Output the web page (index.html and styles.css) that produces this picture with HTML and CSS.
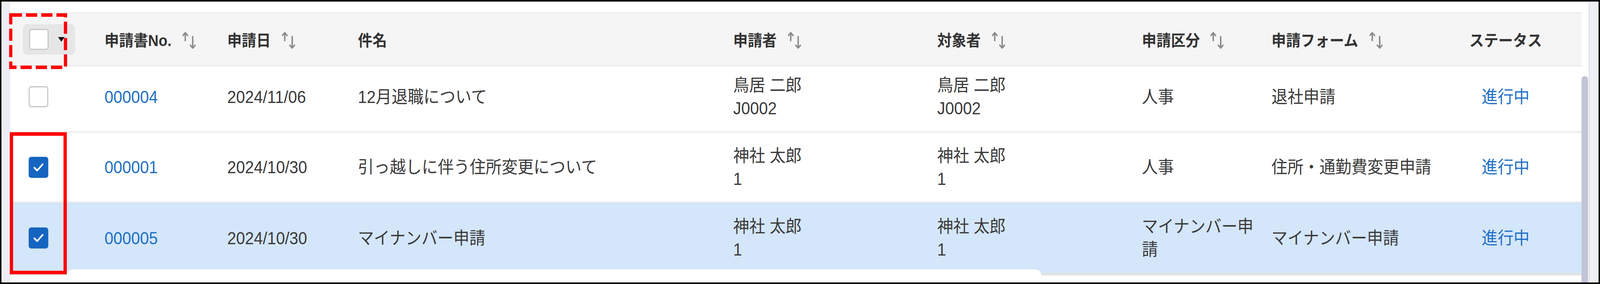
FILE: index.html
```html
<!DOCTYPE html>
<html lang="ja">
<head>
<meta charset="utf-8">
<title>申請一覧</title>
<link rel="stylesheet" href="styles.css">
</head>
<body>
<div class="viewport">
<div class="frame">
  <div class="side-left"></div>
  <div class="main">
    <div class="table">
      <div class="grid head">
        <div class="cell cell-check">
          <div class="hcheck">
            <span class="cb"></span>
            <span class="caret"></span>
          </div>
        </div>
        <div class="cell"><span>申請書No.</span><svg class="sort" viewBox="0 0 36 44"><path d="M7.5 23V3M1 10l6.5-7 6.5 7"/><path d="M28 13v29M21.5 35l6.5 7 6.5-7"/></svg></div>
        <div class="cell"><span>申請日</span><svg class="sort" viewBox="0 0 36 44"><path d="M7.5 23V3M1 10l6.5-7 6.5 7"/><path d="M28 13v29M21.5 35l6.5 7 6.5-7"/></svg></div>
        <div class="cell"><span>件名</span></div>
        <div class="cell"><span>申請者</span><svg class="sort" viewBox="0 0 36 44"><path d="M7.5 23V3M1 10l6.5-7 6.5 7"/><path d="M28 13v29M21.5 35l6.5 7 6.5-7"/></svg></div>
        <div class="cell"><span>対象者</span><svg class="sort" viewBox="0 0 36 44"><path d="M7.5 23V3M1 10l6.5-7 6.5 7"/><path d="M28 13v29M21.5 35l6.5 7 6.5-7"/></svg></div>
        <div class="cell"><span>申請区分</span><svg class="sort sort-tight" viewBox="0 0 36 44"><path d="M7.5 23V3M1 10l6.5-7 6.5 7"/><path d="M28 13v29M21.5 35l6.5 7 6.5-7"/></svg></div>
        <div class="cell"><span>申請フォーム</span><svg class="sort" viewBox="0 0 36 44"><path d="M7.5 23V3M1 10l6.5-7 6.5 7"/><path d="M28 13v29M21.5 35l6.5 7 6.5-7"/></svg></div>
        <div class="cell cell-status"><span>ステータス</span></div>
      </div>

      <div class="grid row first">
        <div class="cell cell-check"><span class="cb"></span></div>
        <div class="cell link">000004</div>
        <div class="cell">2024/11/06</div>
        <div class="cell">12月退職について</div>
        <div class="cell"><div>鳥居 二郎<br>J0002</div></div>
        <div class="cell"><div>鳥居 二郎<br>J0002</div></div>
        <div class="cell"><div>人事</div></div>
        <div class="cell">退社申請</div>
        <div class="cell cell-status link">進行中</div>
      </div>

      <div class="grid row">
        <div class="cell cell-check"><span class="cb on"><svg viewBox="0 0 54 54"><path d="M14 28l9 8 17-18"/></svg></span></div>
        <div class="cell link">000001</div>
        <div class="cell">2024/10/30</div>
        <div class="cell">引っ越しに伴う住所変更について</div>
        <div class="cell"><div>神社 太郎<br>1</div></div>
        <div class="cell"><div>神社 太郎<br>1</div></div>
        <div class="cell"><div>人事</div></div>
        <div class="cell">住所・通勤費変更申請</div>
        <div class="cell cell-status link">進行中</div>
      </div>

      <div class="grid row selected">
        <div class="cell cell-check"><span class="cb on"><svg viewBox="0 0 54 54"><path d="M14 28l9 8 17-18"/></svg></span></div>
        <div class="cell link">000005</div>
        <div class="cell">2024/10/30</div>
        <div class="cell">マイナンバー申請</div>
        <div class="cell"><div>神社 太郎<br>1</div></div>
        <div class="cell"><div>神社 太郎<br>1</div></div>
        <div class="cell"><div>マイナンバー申請</div></div>
        <div class="cell">マイナンバー申請</div>
        <div class="cell cell-status link">進行中</div>
      </div>
    </div>
    <div class="scroll"><div class="thumb"></div></div>
  </div>
  <div class="side-right"></div>

  <div class="bottom-panel"></div>
  <svg class="mark-dashed" viewBox="0 0 160 143"><rect x="4.5" y="4.5" width="151" height="134"/></svg>
  <div class="mark-solid"></div>
</div>
</div>
</body>
</html>
```

FILE: styles.css
```css
* { box-sizing: border-box; }
html, body { margin: 0; padding: 0; overflow: hidden; }
body {
  background: #fff;
  font-family: "Liberation Sans", "Noto Sans CJK JP", sans-serif;
  color: #3a3a3a;
}
.viewport {
  width: 100vw;
  height: 728px;
  overflow: hidden;
}
.frame {
  position: relative;
  width: 4408px;
  height: 728px;
  border: 4px solid #000;
  display: flex;
  background: #fff;
  overflow: hidden;
  transform-origin: 0 0;
}
@media (max-width: 4300px) {
  .frame { transform: scaleX(0.92922); }
}
.side-left {
  flex: none;
  width: 23px;
  background: #eceef5;
  border-right: 1px solid #e0e2ea;
}
.main {
  flex: none;
  width: 4350px;
  display: flex;
}
.table {
  flex: none;
  width: 4330px;
  padding-top: 28px;
}
.scroll {
  flex: none;
  width: 20px;
  padding-top: 191px;
}
.thumb {
  width: 18px;
  height: 100%;
  background: #c1c4d4;
  border-radius: 9px 9px 0 0;
}
.side-right {
  flex: 1;
  background: #eef0f6;
  border-left: 2px solid #d6d9e3;
}
.grid {
  display: grid;
  grid-template-columns: 237px 338px 360px 1034px 562px 564px 357px 511px 367px;
}
.head {
  height: 138px;
  background: #f5f5f5;
  border-top: 2px solid #e7e7e7;
  border-bottom: 2px solid #e7e7e7;
  font-size: 40px;
  font-weight: 700;
  color: #333;
}
.row {
  height: 180px;
  border-bottom: 3px solid #e8e8e8;
  font-size: 44px;
  line-height: 59px;
}
.row.first {
  height: 170px;
  padding-bottom: 11px;
}
.row.selected {
  height: 186px;
  background: #d4e6fa;
  border-bottom: 6px solid #e3e3e3;
}
.cell {
  display: flex;
  align-items: center;
  padding-left: 24px;
  min-width: 0;
}
.cell-check { padding-left: 52px; }
.head .cell-check { padding-left: 36px; }
.cell-status {
  justify-content: center;
  padding-left: 0;
  padding-right: 51px;
}
.link { color: #1f6fc5; }
.sort {
  flex: none;
  width: 36px;
  height: 44px;
  margin-left: 31px;
  margin-top: 4px;
  fill: none;
  stroke: #8a8a8a;
  stroke-width: 4;
  stroke-linecap: round;
  stroke-linejoin: round;
}
.sort-tight { margin-left: 29px; }
.hcheck {
  display: flex;
  align-items: center;
  width: 144px;
  height: 78px;
  padding-left: 17px;
  background: #e6e6e6;
  border-radius: 12px;
}
.cb {
  display: block;
  flex: none;
  width: 54px;
  height: 54px;
  background: #fff;
  border: 3px solid #c6c6c6;
  border-radius: 7px;
}
.cb.on {
  background: #1565c0;
  border-color: #1565c0;
}
.cb svg {
  display: block;
  width: 48px;
  height: 48px;
  fill: none;
  stroke: #fff;
  stroke-width: 5;
  stroke-linecap: round;
  stroke-linejoin: round;
}
.caret {
  display: block;
  width: 0;
  height: 0;
  margin-left: 26px;
  border-left: 9px solid transparent;
  border-right: 9px solid transparent;
  border-top: 12px solid #111;
}
.bottom-panel {
  position: absolute;
  left: 179px;
  top: 686px;
  width: 2687px;
  height: 40px;
  background: #fff;
  border-radius: 18px 18px 0 0;
  box-shadow: 0 -1px 3px rgba(0, 0, 0, 0.06);
}
.mark-dashed {
  position: absolute;
  left: 21px;
  top: 30px;
  width: 160px;
  height: 143px;
  fill: none;
  stroke: #ff0000;
  stroke-width: 9;
  stroke-dasharray: 31 11;
}
.mark-solid {
  position: absolute;
  left: 23px;
  top: 335px;
  width: 157px;
  height: 364px;
  border: 9px solid #ff0000;
}
```
